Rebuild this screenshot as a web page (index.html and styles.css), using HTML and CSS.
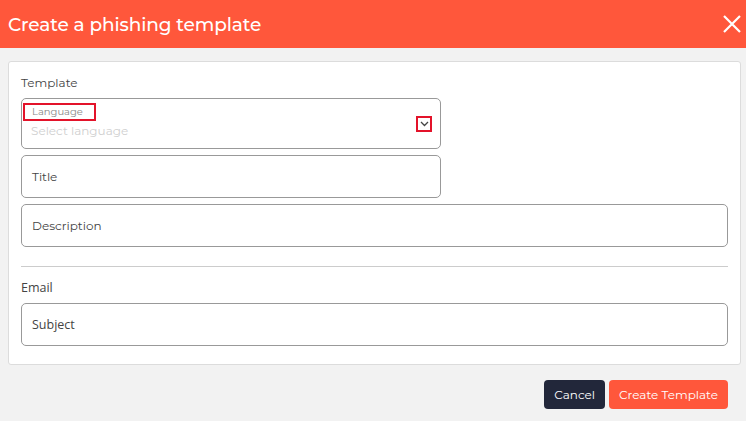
FILE: index.html
```html
<!DOCTYPE html>
<html>
<head>
<meta charset="utf-8">
<link rel="stylesheet" href="styles.css">
</head>
<body>
<div class="modal">
  <header class="head">
    <h1 class="head-title">Create a phishing template</h1>
    <button class="close" aria-label="Close">
      <svg width="18" height="18" viewBox="0 0 18 18"><path d="M1 1L17 17M17 1L1 17" stroke="#fff" stroke-width="2.2" fill="none"/></svg>
    </button>
  </header>
  <div class="body">
    <div class="card">
      <div class="section-label">Template</div>
      <div class="field select half">
        <div class="select-main">
          <span class="mini-label">Language</span>
          <span class="placeholder">Select language</span>
        </div>
        <span class="chev">
          <svg width="9" height="6" viewBox="0 0 9 6"><path d="M1 1L4.5 4.5L8 1" stroke="#444" stroke-width="1.3" fill="none"/></svg>
        </span>
      </div>
      <div class="field half">Title</div>
      <div class="field">Description</div>
      <hr class="divider">
      <div class="section-label alt">Email</div>
      <div class="field alt">Subject</div>
    </div>
    <div class="actions">
      <button class="btn dark">Cancel</button>
      <button class="btn primary">Create Template</button>
    </div>
  </div>
</div>
</body>
</html>
```
FILE: styles.css
```css
* { box-sizing: border-box; }
html, body { margin: 0; padding: 0; }
body {
  width: 746px;
  height: 421px;
  background: #f2f2f2;
  font-family: "Montserrat", "DejaVu Sans", "Noto Sans", sans-serif;
  color: #333;
  overflow: hidden;
}
.head {
  height: 48px;
  background: #ff573b;
  display: flex;
  align-items: center;
  justify-content: space-between;
  padding: 0 4px 0 8px;
}
.head-title {
  margin: 0;
  font-size: 18.5px;
  font-weight: 500;
  color: #fff;
  letter-spacing: -0.1px;
}
.close {
  background: none;
  border: 0;
  padding: 0;
  width: 20px;
  height: 20px;
  display: flex;
  align-items: center;
  justify-content: center;
}
.body { padding: 13px 5px 0 8px; }
.card {
  background: #fff;
  border: 1px solid #dcdcdc;
  border-radius: 3px;
  padding: 12px 12px 18px 12px;
  display: flex;
  flex-direction: column;
  gap: 6px;
}
.section-label {
  font-size: 12px;
  color: #444;
  height: 16px;
  line-height: 16px;
  margin-top: 1px;
  margin-bottom: 1px;
}
.section-label.alt { margin-top: 0; margin-bottom: 1px; }
.section-label.alt, .field.alt {
  font-family: "Open Sans", "Noto Sans", sans-serif;
  font-size: 12.5px;
}
.field {
  height: 43px;
  border: 1px solid #999;
  border-radius: 5px;
  display: flex;
  align-items: center;
  padding: 0 10px;
  font-size: 12px;
  color: #444;
}
.field.half { width: 420px; }
.field.select {
  height: 51px;
  align-items: stretch;
  padding: 4px 8px 0 1px;
}
.select-main {
  display: flex;
  flex-direction: column;
  flex: 1;
}
.mini-label {
  display: block;
  width: 73px;
  height: 18px;
  border: 2px solid #e3132a;
  font-size: 10px;
  color: #888;
  padding-left: 7px;
  line-height: 14px;
}
.placeholder {
  font-size: 12px;
  color: #cfcfcf;
  padding-left: 8px;
  margin-top: 2px;
}
.chev {
  align-self: center;
  width: 16px;
  height: 16px;
  border: 2px solid #e3132a;
  display: flex;
  align-items: center;
  justify-content: center;
  margin-top: -4px;
}
.divider {
  border: 0;
  border-top: 1px solid #ccc;
  margin: 13px 0 7px 0;
}
.actions {
  display: flex;
  justify-content: flex-end;
  gap: 4px;
  padding: 15px 13px 0 0;
}
.btn {
  height: 29px;
  border: 0;
  border-radius: 4px;
  color: #fff;
  font-family: "Montserrat", "DejaVu Sans", sans-serif;
  font-size: 12px;
  padding: 0 10px;
}
.btn.dark { background: #22273a; }
.btn.primary { background: #ff573b; }
```
